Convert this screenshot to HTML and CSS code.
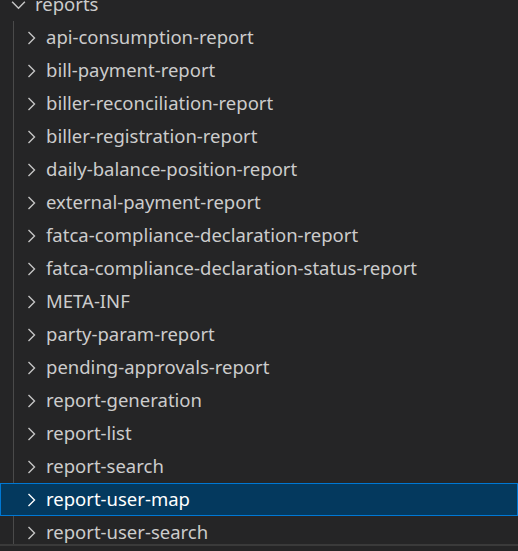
FILE: index.html
```html
<!DOCTYPE html>
<html>
<head>
<meta charset="utf-8">
<link rel="stylesheet" href="styles.css">
</head>
<body>
<div class="tree">
  <div class="row root">
    <svg class="chev" viewBox="0 0 16 16"><path d="M2 5.5 L8 11.5 L14 5.5" /></svg>
    <span class="label">reports</span>
  </div>
  <div class="children">
    <div class="row"><svg class="chev" viewBox="0 0 16 16"><path d="M5.5 2 L11.5 8 L5.5 14" /></svg><span class="label">api-consumption-report</span></div>
    <div class="row"><svg class="chev" viewBox="0 0 16 16"><path d="M5.5 2 L11.5 8 L5.5 14" /></svg><span class="label">bill-payment-report</span></div>
    <div class="row"><svg class="chev" viewBox="0 0 16 16"><path d="M5.5 2 L11.5 8 L5.5 14" /></svg><span class="label">biller-reconciliation-report</span></div>
    <div class="row"><svg class="chev" viewBox="0 0 16 16"><path d="M5.5 2 L11.5 8 L5.5 14" /></svg><span class="label">biller-registration-report</span></div>
    <div class="row"><svg class="chev" viewBox="0 0 16 16"><path d="M5.5 2 L11.5 8 L5.5 14" /></svg><span class="label">daily-balance-position-report</span></div>
    <div class="row"><svg class="chev" viewBox="0 0 16 16"><path d="M5.5 2 L11.5 8 L5.5 14" /></svg><span class="label">external-payment-report</span></div>
    <div class="row"><svg class="chev" viewBox="0 0 16 16"><path d="M5.5 2 L11.5 8 L5.5 14" /></svg><span class="label">fatca-compliance-declaration-report</span></div>
    <div class="row"><svg class="chev" viewBox="0 0 16 16"><path d="M5.5 2 L11.5 8 L5.5 14" /></svg><span class="label">fatca-compliance-declaration-status-report</span></div>
    <div class="row"><svg class="chev" viewBox="0 0 16 16"><path d="M5.5 2 L11.5 8 L5.5 14" /></svg><span class="label">META-INF</span></div>
    <div class="row"><svg class="chev" viewBox="0 0 16 16"><path d="M5.5 2 L11.5 8 L5.5 14" /></svg><span class="label">party-param-report</span></div>
    <div class="row"><svg class="chev" viewBox="0 0 16 16"><path d="M5.5 2 L11.5 8 L5.5 14" /></svg><span class="label">pending-approvals-report</span></div>
    <div class="row"><svg class="chev" viewBox="0 0 16 16"><path d="M5.5 2 L11.5 8 L5.5 14" /></svg><span class="label">report-generation</span></div>
    <div class="row"><svg class="chev" viewBox="0 0 16 16"><path d="M5.5 2 L11.5 8 L5.5 14" /></svg><span class="label">report-list</span></div>
    <div class="row"><svg class="chev" viewBox="0 0 16 16"><path d="M5.5 2 L11.5 8 L5.5 14" /></svg><span class="label">report-search</span></div>
    <div class="row selected"><svg class="chev" viewBox="0 0 16 16"><path d="M5.5 2 L11.5 8 L5.5 14" /></svg><span class="label">report-user-map</span></div>
    <div class="row"><svg class="chev" viewBox="0 0 16 16"><path d="M5.5 2 L11.5 8 L5.5 14" /></svg><span class="label">report-user-search</span></div>
  </div>
</div>
<div class="hscroll"></div>
</body>
</html>
```
FILE: styles.css
```css
html, body {
  margin: 0;
  padding: 0;
  background: #252526;
  height: 100%;
  overflow: hidden;
}
body {
  font-family: "Noto Sans", "Open Sans", sans-serif;
  font-size: 18.5px;
  color: #cccccc;
  display: flex;
  flex-direction: column;
}
.tree {
  margin-top: -12px;
  height: 556px;
  overflow: hidden;
}
.row {
  height: 33px;
  box-sizing: border-box;
  display: flex;
  align-items: center;
  white-space: nowrap;
  border: 1px solid transparent;
}
.root {
  padding-left: 9px;
}
.root .label {
  margin-left: 8px;
}
.children {
  background-image: linear-gradient(#4a4a4a, #4a4a4a);
  background-size: 1px 100%;
  background-position: 13px 0;
  background-repeat: no-repeat;
}
.children .row {
  padding-left: 22px;
}
.chev {
  width: 16px;
  height: 16px;
  flex: none;
  fill: none;
  stroke: #c5c5c5;
  stroke-width: 1.4;
}
.root .chev {
  width: 17px;
  height: 17px;
}
.label {
  margin-left: 7px;
  line-height: 1;
}
.selected {
  background: #04395e;
  border-color: #0078d4;
  color: #ffffff;
}
.selected .chev {
  stroke: #ffffff;
}
.hscroll {
  flex: 1;
  border-top: 2px solid #3a3a3a;
  background: #252526;
}
```
